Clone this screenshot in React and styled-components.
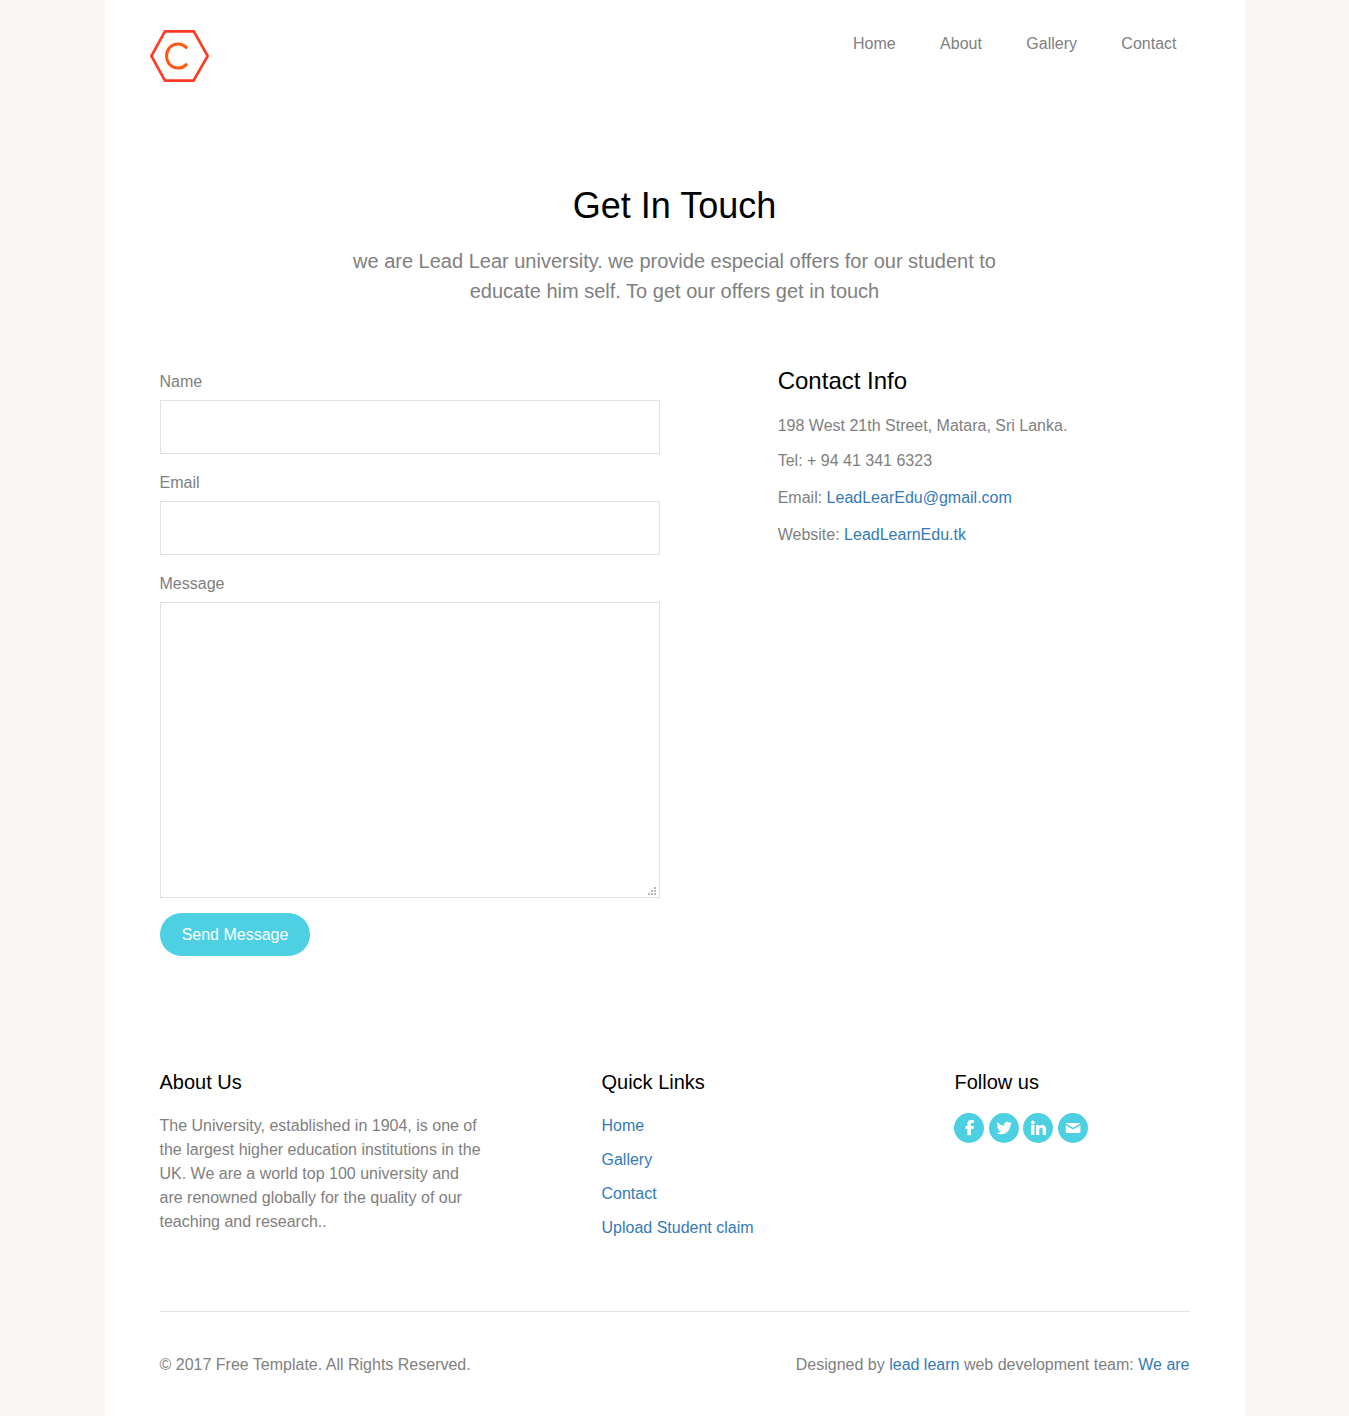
import React from "react";
import styled, { createGlobalStyle } from "styled-components";

const Global = createGlobalStyle`
  *, *::before, *::after { box-sizing: border-box; }
  body {
    margin: 0;
    background: #faf6f3;
    color: #808080;
    font: 16px/24px "Liberation Sans", Arial, sans-serif;
  }
`;

const Page = styled.div`
  width: 1140px;
  height: 1416px;
  margin: 0 auto;
  background: #fff;
`;
const Header = styled.header`
  display: flex;
  justify-content: space-between;
  height: 186px;
  padding: 29px 68px 0 44.5px;
`;
const Logo = styled.svg`
  display: block;
  width: 61px;
  height: 54px;
`;
const Nav = styled.nav`
  display: flex;
  gap: 44.4px;
  padding-top: 3px;
`;
const NavLink = styled.a`
  color: #808080;
  text-decoration: none;
`;
const Hero = styled.section`
  height: 183px;
  text-align: center;
`;
const Title = styled.h1`
  margin: 0 0 20px;
  color: #000;
  font-size: 36px;
  font-weight: 400;
  line-height: 40px;
`;
const Lead = styled.p`
  width: 700px;
  margin: 0 auto;
  font-size: 20px;
  line-height: 30px;
`;
const Main = styled.main`
  display: grid;
  grid-template-columns: 500px 1fr;
  column-gap: 118.2px;
  height: 701px;
  padding: 0 55px;
`;
const Form = styled.form`
  display: flex;
  flex-direction: column;
  align-items: flex-start;
  padding-top: 1px;
`;
const Field = styled.label`
  display: block;
  width: 100%;
  margin-bottom: ${(p) => p.$gap || 17}px;
`;
const Label = styled.span`
  display: block;
  height: 30px;
`;
const Input = styled.input`
  display: block;
  width: 100%;
  height: 54px;
  padding: 0 16px;
  border: 1px solid #e2e2e2;
  background: #fff;
  outline: none;
  font: inherit;
`;
const MessageBox = styled.div`
  display: flex;
  align-items: flex-end;
  height: 296px;
  border: 1px solid #e2e2e2;
`;
const Area = styled.textarea`
  flex: 1;
  height: 100%;
  padding: 12px 0 12px 16px;
  border: 0;
  background: transparent;
  outline: none;
  resize: none;
  font: inherit;
`;
const Grip = styled.svg`
  width: 8px;
  height: 8px;
  margin: 0 2.5px 2px 0;
`;
const Submit = styled.button`
  width: 150px;
  height: 43px;
  margin-left: 0.5px;
  padding: 0;
  border: 0;
  border-radius: 22px;
  background: #4dd0e1;
  color: #fff;
  font: inherit;
`;
const Heading = styled.h2`
  margin: 0 0 ${(p) => p.$gap}px;
  color: #000;
  font-size: ${(p) => p.$size}px;
  font-weight: 400;
  line-height: 24px;
`;
const Line = styled.p`
  margin: 0 0 ${(p) => p.$gap || 0}px;
`;
const Link = styled.a`
  color: #337ab7;
  text-decoration: none;
`;
const Footer = styled.footer`
  padding: 0 55px;
`;
const Columns = styled.div`
  display: grid;
  grid-template-columns: 442px 353px 1fr;
  height: 241px;
`;
const LinkList = styled.div`
  display: flex;
  flex-direction: column;
  align-items: flex-start;
  gap: 10px;
`;
const Socials = styled.div`
  display: flex;
  gap: 4.6px;
  margin-left: -0.5px;
`;
const Social = styled.svg`
  display: block;
  width: 30px;
  height: 30px;
`;
const Legal = styled.div`
  display: flex;
  justify-content: space-between;
  padding-top: 41px;
  border-top: 1px solid #e2e2e2;
`;

const socialShapes = [
  <path d="M13.4 22.300v-6.300H11.500v-2.900h1.900v-2.200c0-2.600 1.300-3.900 3.700-3.900h2.700v2.900H18.200c-.900 0-1.300.4-1.300 1.200V13.100h2.900l-.4 2.900H16.900v6.300z" />,
  <path d="M23 10.200c-.6.300-1.200.4-1.800.5.700-.4 1.100-1 1.400-1.700-.6.4-1.300.6-2 .8a3.200 3.200 0 0 0-5.500 2.900c-2.600-.1-5-1.400-6.600-3.400-.9 1.500-.4 3.300 1 4.300-.5 0-1-.2-1.400-.4 0 1.600 1.100 2.900 2.500 3.200-.5.100-1 .1-1.400 0 .4 1.300 1.600 2.200 3 2.200a6.500 6.500 0 0 1-4.700 1.300c5.700 3.500 13.200 0 13.900-7.100v-1c.6-.4 1.200-1 1.600-1.600z" />,
  <path d="M8.100 12.100h3.300V22H8.100zM9.800 7.500a1.900 1.900 0 1 1 0 3.800 1.900 1.900 0 0 1 0-3.800zM13 12.100h3.200v1.300c.5-.9 1.500-1.500 2.900-1.500 2.900 0 3.900 1.700 3.900 4.400V22h-3.300v-5c0-1.300-.2-2.300-1.500-2.300s-1.900.9-1.900 2.300v5H13z" />,
  <path d="M8.500 10h13.200c.4 0 .7.200.7.500L15 14.800 7.800 10.500c0-.3.300-.5.700-.5zM7.800 12.200l7.200 4.200 7.400-4.200v7c0 .5-.3.800-.8.800h-13c-.5 0-.8-.3-.8-.8z" />,
];

const dots = [[6, 0], [3, 3], [6, 3], [0, 6], [3, 6], [6, 6]];

export default function App() {
  return (
    <>
      <Global />
      <Page>
        <Header>
          <Logo viewBox="0 0 61 54" fill="none">
            <path d="M16 2.400H44.800L58.700 27 44.500 51.600H16L2.400 27z" stroke="#ff3b25" strokeWidth="2.700" />
            <path d="M37.200 18.400C33.300 14.300 26.600 13.900 22.400 17.000c-6.400 5-6.400 15.200 0 20 4.200 3.100 10.900 2.700 14.800-1.300" stroke="#ff5714" strokeWidth="3.100" strokeLinecap="round" />
          </Logo>
          <Nav>
            {["Home", "About", "Gallery", "Contact"].map((t) => (
              <NavLink key={t}>{t}</NavLink>
            ))}
          </Nav>
        </Header>
        <Hero>
          <Title>Get In Touch</Title>
          <Lead>
            we are Lead Lear university. we provide especial offers for our student to
            <br />
            educate him self. To get our offers get in touch
          </Lead>
        </Hero>
        <Main>
          <Form>
            <Field><Label>Name</Label><Input /></Field>
            <Field><Label>Email</Label><Input /></Field>
            <Field $gap={15}>
              <Label>Message</Label>
              <MessageBox>
                <Area />
                <Grip viewBox="0 0 8 8" shapeRendering="crispEdges">
                  {dots.map(([x, y]) => (
                    <rect key={`${x}-${y}`} x={x} y={y} width="2" height="2" fill="#bbb" />
                  ))}
                </Grip>
              </MessageBox>
            </Field>
            <Submit type="button">Send Message</Submit>
          </Form>
          <div>
            <Heading $size={24} $gap={21}>Contact Info</Heading>
            <Line $gap={11}>198 West 21th Street, Matara, Sri Lanka.</Line>
            <Line $gap={13}>Tel: + 94 41 341 6323</Line>
            <Line $gap={13}>Email: <Link>LeadLearEdu@gmail.com</Link></Line>
            <Line>Website: <Link>LeadLearnEdu.tk</Link></Line>
          </div>
        </Main>
        <Footer>
          <Columns>
            <div>
              <Heading $size={20} $gap={20}>About Us</Heading>
              <Line>
                The University, established in 1904, is one of<br />
                the largest higher education institutions in the<br />
                UK. We are a world top 100 university and<br />
                are renowned globally for the quality of our<br />
                teaching and research..
              </Line>
            </div>
            <div>
              <Heading $size={20} $gap={20}>Quick Links</Heading>
              <LinkList>
                {["Home", "Gallery", "Contact", "Upload Student claim"].map((t) => (
                  <Link key={t}>{t}</Link>
                ))}
              </LinkList>
            </div>
            <div>
              <Heading $size={20} $gap={19}>Follow us</Heading>
              <Socials>
                {socialShapes.map((shape, i) => (
                  <Social key={i} viewBox="0 0 30 30" fill="#fff">
                    <circle cx="15" cy="15" r="15" fill="#4dd0e1" />
                    {shape}
                  </Social>
                ))}
              </Socials>
            </div>
          </Columns>
          <Legal>
            <span>© 2017 Free Template. All Rights Reserved.</span>
            <span>Designed by <Link>lead learn</Link> web development team: <Link>We are</Link></span>
          </Legal>
        </Footer>
      </Page>
    </>
  );
}
